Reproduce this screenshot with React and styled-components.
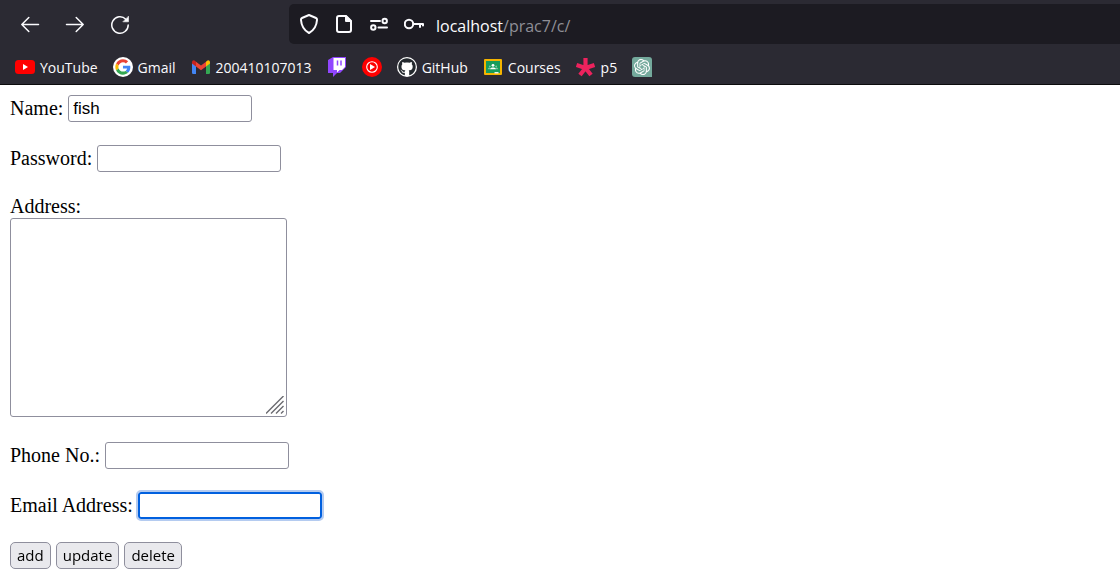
import React from 'react';
import styled, { createGlobalStyle } from 'styled-components';
import { FaGithub } from 'react-icons/fa';
import { SiOpenai } from 'react-icons/si';

const GlobalStyle = createGlobalStyle`
  *, *::before, *::after { box-sizing: border-box; }
  body {
    margin: 0;
    background: #fff;
    color: #000;
    font-family: 'Liberation Serif', 'Times New Roman', serif;
    font-size: 20px;
  }
`;

const Chrome = styled.header`
  background: #2b2a33;
  border-bottom: 1px solid #0c0c0d;
  color: #fbfbfe;
  font-family: 'Open Sans', 'Noto Sans', sans-serif;
`;

const Toolbar = styled.div`
  display: flex;
  align-items: center;
  padding: 4px 0 6px 20px;
`;

const NavButtons = styled.nav`
  display: flex;
  gap: 25px;
  flex: none;
  margin-right: 159px;
`;

const IconButton = styled.button`
  display: flex;
  flex: none;
  padding: 0;
  border: 0;
  background: none;
  color: inherit;
`;

const Icon = styled.svg.attrs({ width: 20, height: 20, viewBox: '0 0 20 20', 'aria-hidden': true })`
  display: block;
  flex: none;
  fill: none;
`;

const LineIcon = styled(Icon)`
  stroke: #fbfbfe;
  stroke-width: ${({ $bold }) => ($bold ? 2 : 1.5)};
  stroke-linecap: round;
  stroke-linejoin: round;
`;

const AddressBar = styled.div`
  display: flex;
  align-items: center;
  flex: 1;
  min-width: 0;
  height: 40px;
  padding-left: 10px;
  background: #1c1b22;
  border-radius: 5px 0 0 5px;
`;

const SiteIcons = styled.div`
  display: flex;
  gap: 15px;
  margin-right: 12px;
`;

const Url = styled.span`
  font-size: 16px;
  line-height: 24px;
  padding-top: 3px;
  color: ${({ $dim }) => ($dim ? '#8f8f96' : '#fbfbfe')};
`;

const Bookmarks = styled.nav`
  display: flex;
  align-items: center;
  gap: 15px;
  height: 34px;
  padding-left: 15px;
`;

const Bookmark = styled.a`
  display: flex;
  align-items: center;
  gap: 5px;
  flex: none;
  color: inherit;
  font-size: 14px;
  line-height: 20px;
  text-decoration: none;
  white-space: nowrap;
`;

const BookmarkText = styled.span`
  padding-top: 2px;
`;

const GithubBadge = styled.span`
  display: grid;
  place-items: center;
  width: 20px;
  height: 20px;
  border-radius: 50%;
  background: #fff;
  color: #24292e;
  font-size: 18px;
`;

const OpenAiBadge = styled(GithubBadge)`
  border-radius: 3px 3px 0 3px;
  background: #74a99c;
  color: #fff;
  font-size: 16px;
`;

const Form = styled.form`
  display: flex;
  flex-direction: column;
  gap: 23px;
  padding: 10px;
`;

const Row = styled.div`
  display: flex;
  align-items: center;
  gap: 5px;
`;

const Label = styled.label`
  display: block;
  line-height: 23px;
`;

const Field = styled.input`
  width: 184px;
  height: 27px;
  padding: 1px 4px;
  border: 1px solid #8f8f9d;
  border-radius: 3px;
  background: #fff;
  color: #000;
  font: 17px 'Liberation Sans', Arial, sans-serif;

  &:focus {
    border: 2px solid #0060df;
    outline: 2px solid #b4cbf0;
    caret-color: transparent;
  }
`;

const AreaBlock = styled.div`
  padding-bottom: 2px;
`;

const AreaFrame = styled.div`
  position: relative;
  width: 277px;
`;

const Area = styled.textarea`
  display: block;
  width: 100%;
  height: 199px;
  padding: 2px;
  border: 1px solid #8f8f9d;
  border-radius: 3px;
  resize: none;
  font: 17px 'Liberation Mono', monospace;
`;

const Grip = styled.svg`
  position: absolute;
  right: 3px;
  bottom: 3px;
  pointer-events: none;
`;

const ActionButton = styled.button`
  height: 27px;
  padding: 0 6px;
  border: 1px solid #8f8f9d;
  border-radius: 5px;
  background: #e9e9ed;
  color: #000;
  font: 15px/23px 'Open Sans', 'Noto Sans', sans-serif;
`;

const YouTubeIcon = () => (
  <Icon>
    <rect y="3" width="20" height="14" rx="3.5" fill="#f00" />
    <path d="M8 7l5 3-5 3z" fill="#fff" />
  </Icon>
);

const GoogleIcon = () => (
  <Icon>
    <circle cx="10" cy="10" r="10" fill="#fff" />
    <g transform="translate(2.3 2.3) scale(.32)">
      <path fill="#EA4335" d="M24 9.5c3.54 0 6.71 1.22 9.21 3.6l6.85-6.85C35.9 2.38 30.47 0 24 0 14.62 0 6.51 5.38 2.56 13.22l7.98 6.19C12.43 13.72 17.74 9.5 24 9.5z" />
      <path fill="#4285F4" d="M46.98 24.55c0-1.57-.15-3.09-.38-4.55H24v9.02h12.94c-.58 2.96-2.26 5.48-4.78 7.18l7.73 6c4.51-4.18 7.09-10.36 7.09-17.65z" />
      <path fill="#FBBC05" d="M10.53 28.59c-.48-1.45-.76-2.99-.76-4.59s.27-3.14.76-4.59l-7.98-6.19C.92 16.46 0 20.12 0 24c0 3.88.92 7.54 2.56 10.78l7.97-6.19z" />
      <path fill="#34A853" d="M24 48c6.48 0 11.93-2.13 15.89-5.81l-7.73-6c-2.15 1.45-4.92 2.3-8.16 2.3-6.26 0-11.57-4.22-13.47-9.91l-7.98 6.19C6.51 42.62 14.62 48 24 48z" />
    </g>
  </Icon>
);

const GmailIcon = () => (
  <Icon>
    <path d="M1 5.5l4 3V17H2.2Q1 17 1 15.8z" fill="#4285f4" />
    <path d="M15 8.500l4-3v10.300q0 1.200-1.200 1.200H15z" fill="#34a853" />
    <path d="M5 4.700l5 3.800 5-3.800v4.800l-5 3.800-5-3.800z" fill="#ea4335" />
    <path d="M1 5.200c0-2 2-2.600 3.200-1.300L5 4.700v4.800L1 6.600z" fill="#c5221f" />
    <path d="M19 5.200c0-2-2-2.600-3.200-1.300l-.8.8v4.800l4-2.900z" fill="#fbbc04" />
  </Icon>
);

const TwitchIcon = () => (
  <Icon>
    <path d="M6 0L1 3v13h5v4l4-4h3l6-6V0z" fill="#9146ff" />
    <path d="M6.500 1H18v9l-3 3h-2.500L10 15.500V13H6.500z" fill="#fff" />
    <path d="M10.500 3.500v5M14 3.500v5" stroke="#9146ff" strokeWidth="1.500" />
  </Icon>
);

const MusicIcon = () => (
  <Icon>
    <circle cx="10" cy="10" r="10" fill="#f00" />
    <circle cx="10" cy="10" r="5.300" stroke="#fff" strokeWidth="1.100" />
    <path d="M8 7l5 3-5 3z" fill="#fff" />
  </Icon>
);

const ClassroomIcon = () => (
  <Icon>
    <rect x="1" y="2" width="18" height="16" rx="1" fill="#f4b400" />
    <rect x="3" y="4" width="14" height="12" fill="#179c5b" />
    <circle cx="10" cy="8.300" r="1.400" fill="#fff" />
    <path d="M7 12.200c0-2.400 6-2.400 6 0z" fill="#fff" />
    <circle cx="6.800" cy="9.500" r=".9" fill="#78c6a0" />
    <circle cx="13.200" cy="9.500" r=".9" fill="#78c6a0" />
    <path d="M4.800 12.200c0-1.700 2.200-1.700 2.200-1v1zM15.200 12.200c0-1.700-2.200-1.700-2.200-1v1z" fill="#78c6a0" />
    <path d="M11.500 15h4v1.500h-4z" fill="#e8f5ee" />
  </Icon>
);

const P5Icon = () => (
  <Icon>
    <path d="M9.500 11V1M9.500 11L.5 8M9.500 11l9-3M9.500 11L4 18M9.500 11l5.500 7" stroke="#ed225d" strokeWidth="4.200" />
  </Icon>
);

const bookmarks = [
  { name: 'YouTube', icon: <YouTubeIcon />, text: 'YouTube' },
  { name: 'Gmail', icon: <GoogleIcon />, text: 'Gmail' },
  { name: 'Mail', icon: <GmailIcon />, text: '200410107013' },
  { name: 'Twitch', icon: <TwitchIcon /> },
  { name: 'YouTube Music', icon: <MusicIcon /> },
  { name: 'GitHub', icon: <GithubBadge><FaGithub /></GithubBadge>, text: 'GitHub' },
  { name: 'Courses', icon: <ClassroomIcon />, text: 'Courses' },
  { name: 'p5', icon: <P5Icon />, text: 'p5' },
  { name: 'ChatGPT', icon: <OpenAiBadge><SiOpenai /></OpenAiBadge> },
];

const TextField = ({ id, label, ...rest }) => (
  <Row>
    <Label htmlFor={id}>{label}</Label>
    <Field id={id} name={id} {...rest} />
  </Row>
);

export default function App() {
  return (
    <>
      <GlobalStyle />
      <Chrome>
        <Toolbar>
          <NavButtons>
            <IconButton aria-label="Back">
              <LineIcon><path d="M18.500 10.500H1.800M8.800 3.500l-7 7 7 7" /></LineIcon>
            </IconButton>
            <IconButton aria-label="Forward">
              <LineIcon><path d="M1.500 10.500h16.700M11.200 3.500l7 7-7 7" /></LineIcon>
            </IconButton>
            <IconButton aria-label="Reload">
              <LineIcon>
                <path d="M18.200 11A8.200 8.200 0 1 1 15.800 5.200" />
                <path d="M18.500 2.500v5.300h-5.300z" fill="#fbfbfe" strokeWidth=".6" />
              </LineIcon>
            </IconButton>
          </NavButtons>
          <AddressBar>
            <SiteIcons>
              <LineIcon $bold>
                <path d="M10 1L17 4c.9.400 1.100 1 1 2-.4 6-3 10.300-8 13C5 16.300 2.400 12 2 6c-.1-1 .1-1.600 1-2z" />
              </LineIcon>
              <LineIcon $bold>
                <path d="M11.500 2H5a2 2 0 0 0-2 2v12a2 2 0 0 0 2 2h10a2 2 0 0 0 2-2V7.500z" />
                <path d="M12 2v5h5z" fill="#fbfbfe" />
              </LineIcon>
              <LineIcon $bold>
                <path d="M2 7h9M9.500 13.500h8.500" />
                <circle cx="15.700" cy="7" r="2.200" />
                <circle cx="4.300" cy="13.500" r="2.200" />
              </LineIcon>
              <LineIcon $bold>
                <circle cx="5" cy="10" r="4.200" />
                <path d="M9.500 10H19v1.500M16 10v3" />
              </LineIcon>
            </SiteIcons>
            <Url>localhost</Url>
            <Url $dim>/prac7/c/</Url>
          </AddressBar>
        </Toolbar>
        <Bookmarks>
          {bookmarks.map(({ name, icon, text }) => (
            <Bookmark key={name} href="#" aria-label={name}>
              {icon}
              {text && <BookmarkText>{text}</BookmarkText>}
            </Bookmark>
          ))}
        </Bookmarks>
      </Chrome>
      <Form onSubmit={(e) => e.preventDefault()}>
        <TextField id="name" label="Name:" type="text" defaultValue="fish" />
        <TextField id="password" label="Password:" type="password" />
        <AreaBlock>
          <Label htmlFor="address">Address:</Label>
          <AreaFrame>
            <Area id="address" name="address" />
            <Grip width="18" height="18" viewBox="0 0 18 18" aria-hidden="true">
              <path d="M0 17.500L17.500 0M5 17.500L17.500 5M10 17.500l7.500-7.500M15 17.500l2.500-2.500" stroke="#6b6b70" strokeWidth="1.400" />
            </Grip>
          </AreaFrame>
        </AreaBlock>
        <TextField id="phone" label="Phone No.:" type="text" />
        <TextField id="email" label="Email Address:" type="email" autoFocus />
        <Row>
          <ActionButton type="button">add</ActionButton>
          <ActionButton type="button">update</ActionButton>
          <ActionButton type="button">delete</ActionButton>
        </Row>
      </Form>
    </>
  );
}
